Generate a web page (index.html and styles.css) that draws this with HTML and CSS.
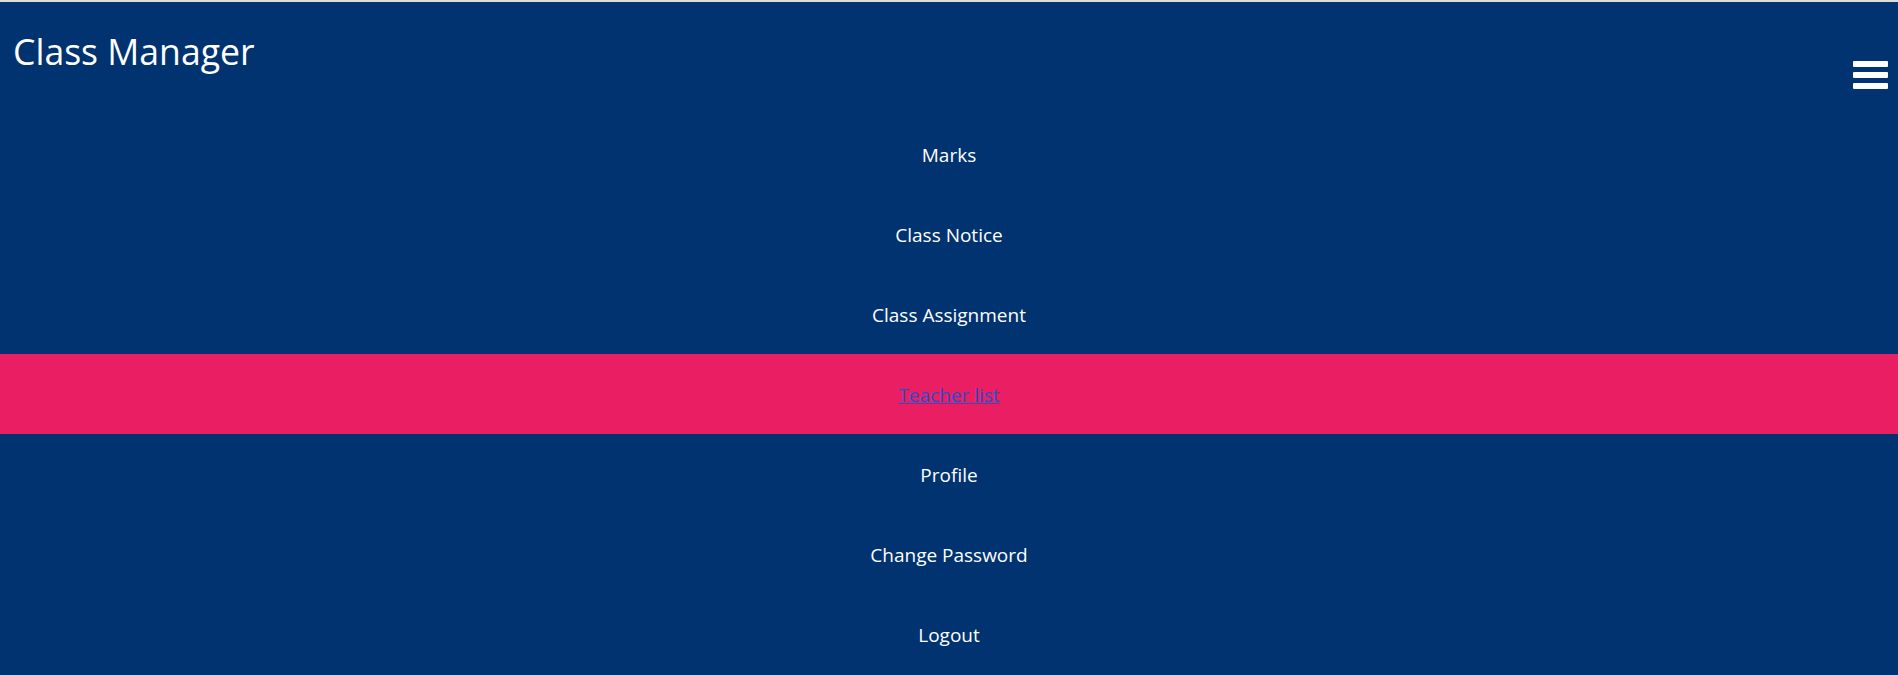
FILE: index.html
```html
<!DOCTYPE html>
<html lang="en">
<head>
<meta charset="utf-8">
<title>Class Manager</title>
<link rel="stylesheet" href="styles.css">
</head>
<body>
<div class="page">
  <header class="topbar">
    <h1 class="brand">Class Manager</h1>
    <button class="burger" aria-label="Menu">
      <span class="bar"></span>
      <span class="bar"></span>
      <span class="bar"></span>
    </button>
  </header>
  <nav class="menu">
    <ul class="menu-list">
      <li class="menu-item"><a class="menu-link" href="#">Marks</a></li>
      <li class="menu-item"><a class="menu-link" href="#">Class Notice</a></li>
      <li class="menu-item"><a class="menu-link" href="#">Class Assignment</a></li>
      <li class="menu-item active"><a class="menu-link" href="#">Teacher list</a></li>
      <li class="menu-item"><a class="menu-link" href="#">Profile</a></li>
      <li class="menu-item"><a class="menu-link" href="#">Change Password</a></li>
      <li class="menu-item"><a class="menu-link" href="#">Logout</a></li>
    </ul>
  </nav>
</div>
</body>
</html>
```
FILE: styles.css
```css
html, body {
  margin: 0;
  padding: 0;
  background: #003370;
}
body {
  border-top: 2px solid #dcdcdc;
  font-family: "Open Sans", "Noto Sans", sans-serif;
  overflow: hidden;
}
.page {
  background: #003370;
  color: #ffffff;
}
.topbar {
  display: flex;
  justify-content: space-between;
  align-items: flex-start;
  height: 112px;
}
.brand {
  margin: 0;
  padding: 25px 0 0 13px;
  font-weight: 400;
  font-size: 35.6px;
  line-height: 48px;
}
.burger {
  background: none;
  border: 0;
  padding: 0;
  margin: 59px 10px 0 0;
  display: flex;
  flex-direction: column;
  gap: 5px;
  cursor: pointer;
}
.bar {
  display: block;
  width: 35px;
  height: 6px;
  background: #ffffff;
  border-radius: 1px;
}
.menu-list {
  list-style: none;
  margin: 0;
  padding: 0;
}
.menu-item {
  height: 80px;
  box-sizing: border-box;
  padding-top: 2px;
  display: flex;
  align-items: center;
  justify-content: center;
  font-size: 19px;
}
.menu-link {
  color: #ffffff;
  text-decoration: none;
}
.menu-item.active {
  background: #e91e63;
}
.menu-item.active .menu-link {
  color: #2a50c8;
  text-decoration: underline;
}
```
